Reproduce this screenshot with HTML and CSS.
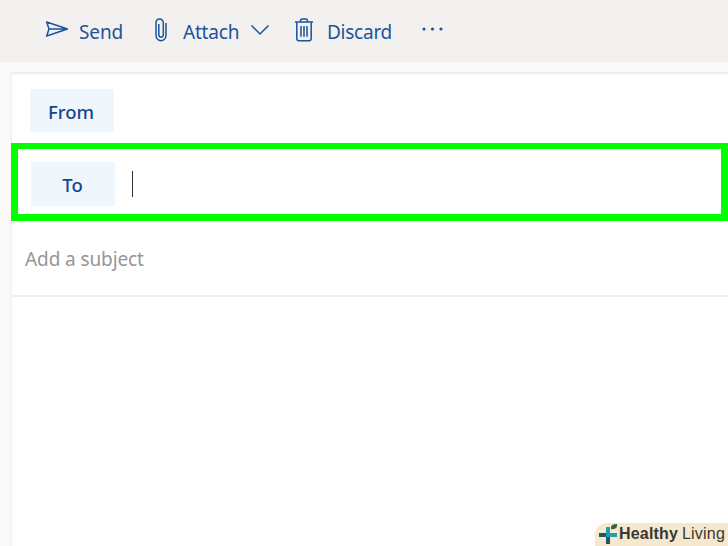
FILE: index.html
```html
<!DOCTYPE html>
<html lang="en">
<head>
<meta charset="utf-8">
<title>New message</title>
<link rel="stylesheet" href="styles.css">
</head>
<body>
<header class="toolbar">
  <div class="command send">
    <svg class="icon" width="24" height="20" viewBox="0 0 24 20"><path d="M1.7 3 L22.5 10 L1.7 17 L4 10 Z M4 10 H20"/></svg>
    <span class="label">Send</span>
  </div>
  <div class="command attach">
    <svg class="icon" width="14" height="26" viewBox="0 0 14 26"><path d="M12 6 V18 C12 25.5 2 25.5 2 18 V6 C2 .6 9.3 .6 9.3 6 V17.5 C9.3 21 4.8 21 4.8 17.5 V7"/></svg>
    <span class="label">Attach</span>
    <svg class="icon chevron" width="20" height="12" viewBox="0 0 20 12"><path d="M1.5 1.5 L10 10 L18.5 1.5"/></svg>
  </div>
  <div class="command discard">
    <svg class="icon" width="20" height="26" viewBox="0 0 20 26"><path d="M1 5 H19 M6.5 5 V3.7 Q6.5 2 8.2 2 H11.8 Q13.5 2 13.5 3.7 V5 M2.8 5 V21.5 Q2.8 23.8 5 23.8 H15 Q17.2 23.8 17.2 21.5 V5 M7 9 V19.8 M10 9 V19.8 M13 9 V19.8"/></svg>
    <span class="label">Discard</span>
  </div>
  <svg class="more" width="24" height="6" viewBox="0 0 24 6"><circle cx="3" cy="3" r="1.6"/><circle cx="11.5" cy="3" r="1.6"/><circle cx="20" cy="3" r="1.6"/></svg>
</header>
<main class="compose">
  <div class="from-row"><div class="button">From</div></div>
  <div class="to-row"><div class="button">To</div><span class="caret"></span></div>
  <div class="subject"><span class="placeholder">Add a subject</span></div>
</main>
<div class="brand">
  <svg width="21" height="22" viewBox="0 0 21 22">
    <path d="M1 12 H19" stroke="#249eaa" stroke-width="4"/>
    <path d="M10 4 V21" stroke="#249eaa" stroke-width="4"/>
    <path d="M1 12 H8 M10 14 V21" stroke="#235760" stroke-width="4"/>
    <path d="M13 6 Q12 1 19 1 Q20 7 13 6Z" fill="#35662e"/>
  </svg>
  <b class="healthy">Healthy</b><span class="living">Living</span>
</div>
</body>
</html>
```

FILE: styles.css
```css
* { box-sizing: border-box; }
body {
  margin: 0;
  height: 546px;
  overflow: hidden;
  background: #faf9f8;
  font-family: "Noto Sans", "Open Sans", sans-serif;
}
.toolbar {
  height: 62px;
  display: flex;
  align-items: flex-start;
  background: #f2f1f0;
  color: #1c539c;
  padding-left: 45px;
}
.command { display: flex; align-items: flex-start; height: 62px; }
.icon { flex: none; fill: none; stroke: #1c539c; stroke-width: 1.5; stroke-linejoin: round; }
.label { font-size: 19px; line-height: 28px; margin-top: 18px; white-space: nowrap; }
.send { width: 109px; }
.send .icon { margin-top: 19px; }
.send .label { margin-left: 10px; letter-spacing: -0.1px; }
.attach { width: 140px; }
.attach .icon { margin-top: 17px; }
.attach .label { margin-left: 15px; width: 57px; letter-spacing: -0.2px; }
.attach .chevron { margin: 24px 0 0 10px; }
.discard { width: 127px; }
.discard .icon { margin-top: 17px; }
.discard .label { margin-left: 13px; letter-spacing: -0.25px; }
.more { margin-top: 26px; fill: #1c539c; }
.compose {
  margin: 10px 0 0 11px;
  height: 474px;
  border: solid #efeeed;
  border-width: 2px 0 0 1px;
  border-top-left-radius: 3px;
  background: #fff;
}
.from-row { height: 69px; padding: 15px 0 0 18px; }
.button {
  width: 84px;
  height: 43px;
  background: #eff6fc;
  border-radius: 2px;
  color: #16468e;
  font-size: 18.5px;
  font-weight: 500;
  line-height: 45px;
  text-align: center;
}
.from-row .button { padding-right: 2px; }
.to-row {
  height: 78px;
  margin-left: -1px;
  border: 7px solid #00ff00;
  border-top-width: 6px;
  background: #fff;
  display: flex;
  padding: 13px 0 0 13px;
}
.to-row .button { width: 84px; height: 44px; line-height: 46px; padding-right: 1px; }
.caret { width: 1px; height: 26px; margin: 9px 0 0 17px; background: #333; }
.subject {
  height: 76px;
  border-bottom: 2px solid #f0efee;
  padding: 24px 0 0 13px;
}
.placeholder { display: block; font-size: 19px; line-height: 28px; color: #969696; letter-spacing: -0.1px; }
.brand {
  position: absolute;
  right: 0;
  bottom: 0;
  width: 133px;
  height: 23px;
  padding-left: 3px;
  display: flex;
  background: #f5e8cf;
  border-top-left-radius: 12px;
  font-family: "Liberation Sans", sans-serif;
  font-size: 16px;
  line-height: 22px;
  color: #393831;
}
.brand svg { flex: none; fill: none; }
.healthy { width: 60px; white-space: nowrap; letter-spacing: 0.2px; }
.living { margin-left: 3px; letter-spacing: 0.2px; }
```
